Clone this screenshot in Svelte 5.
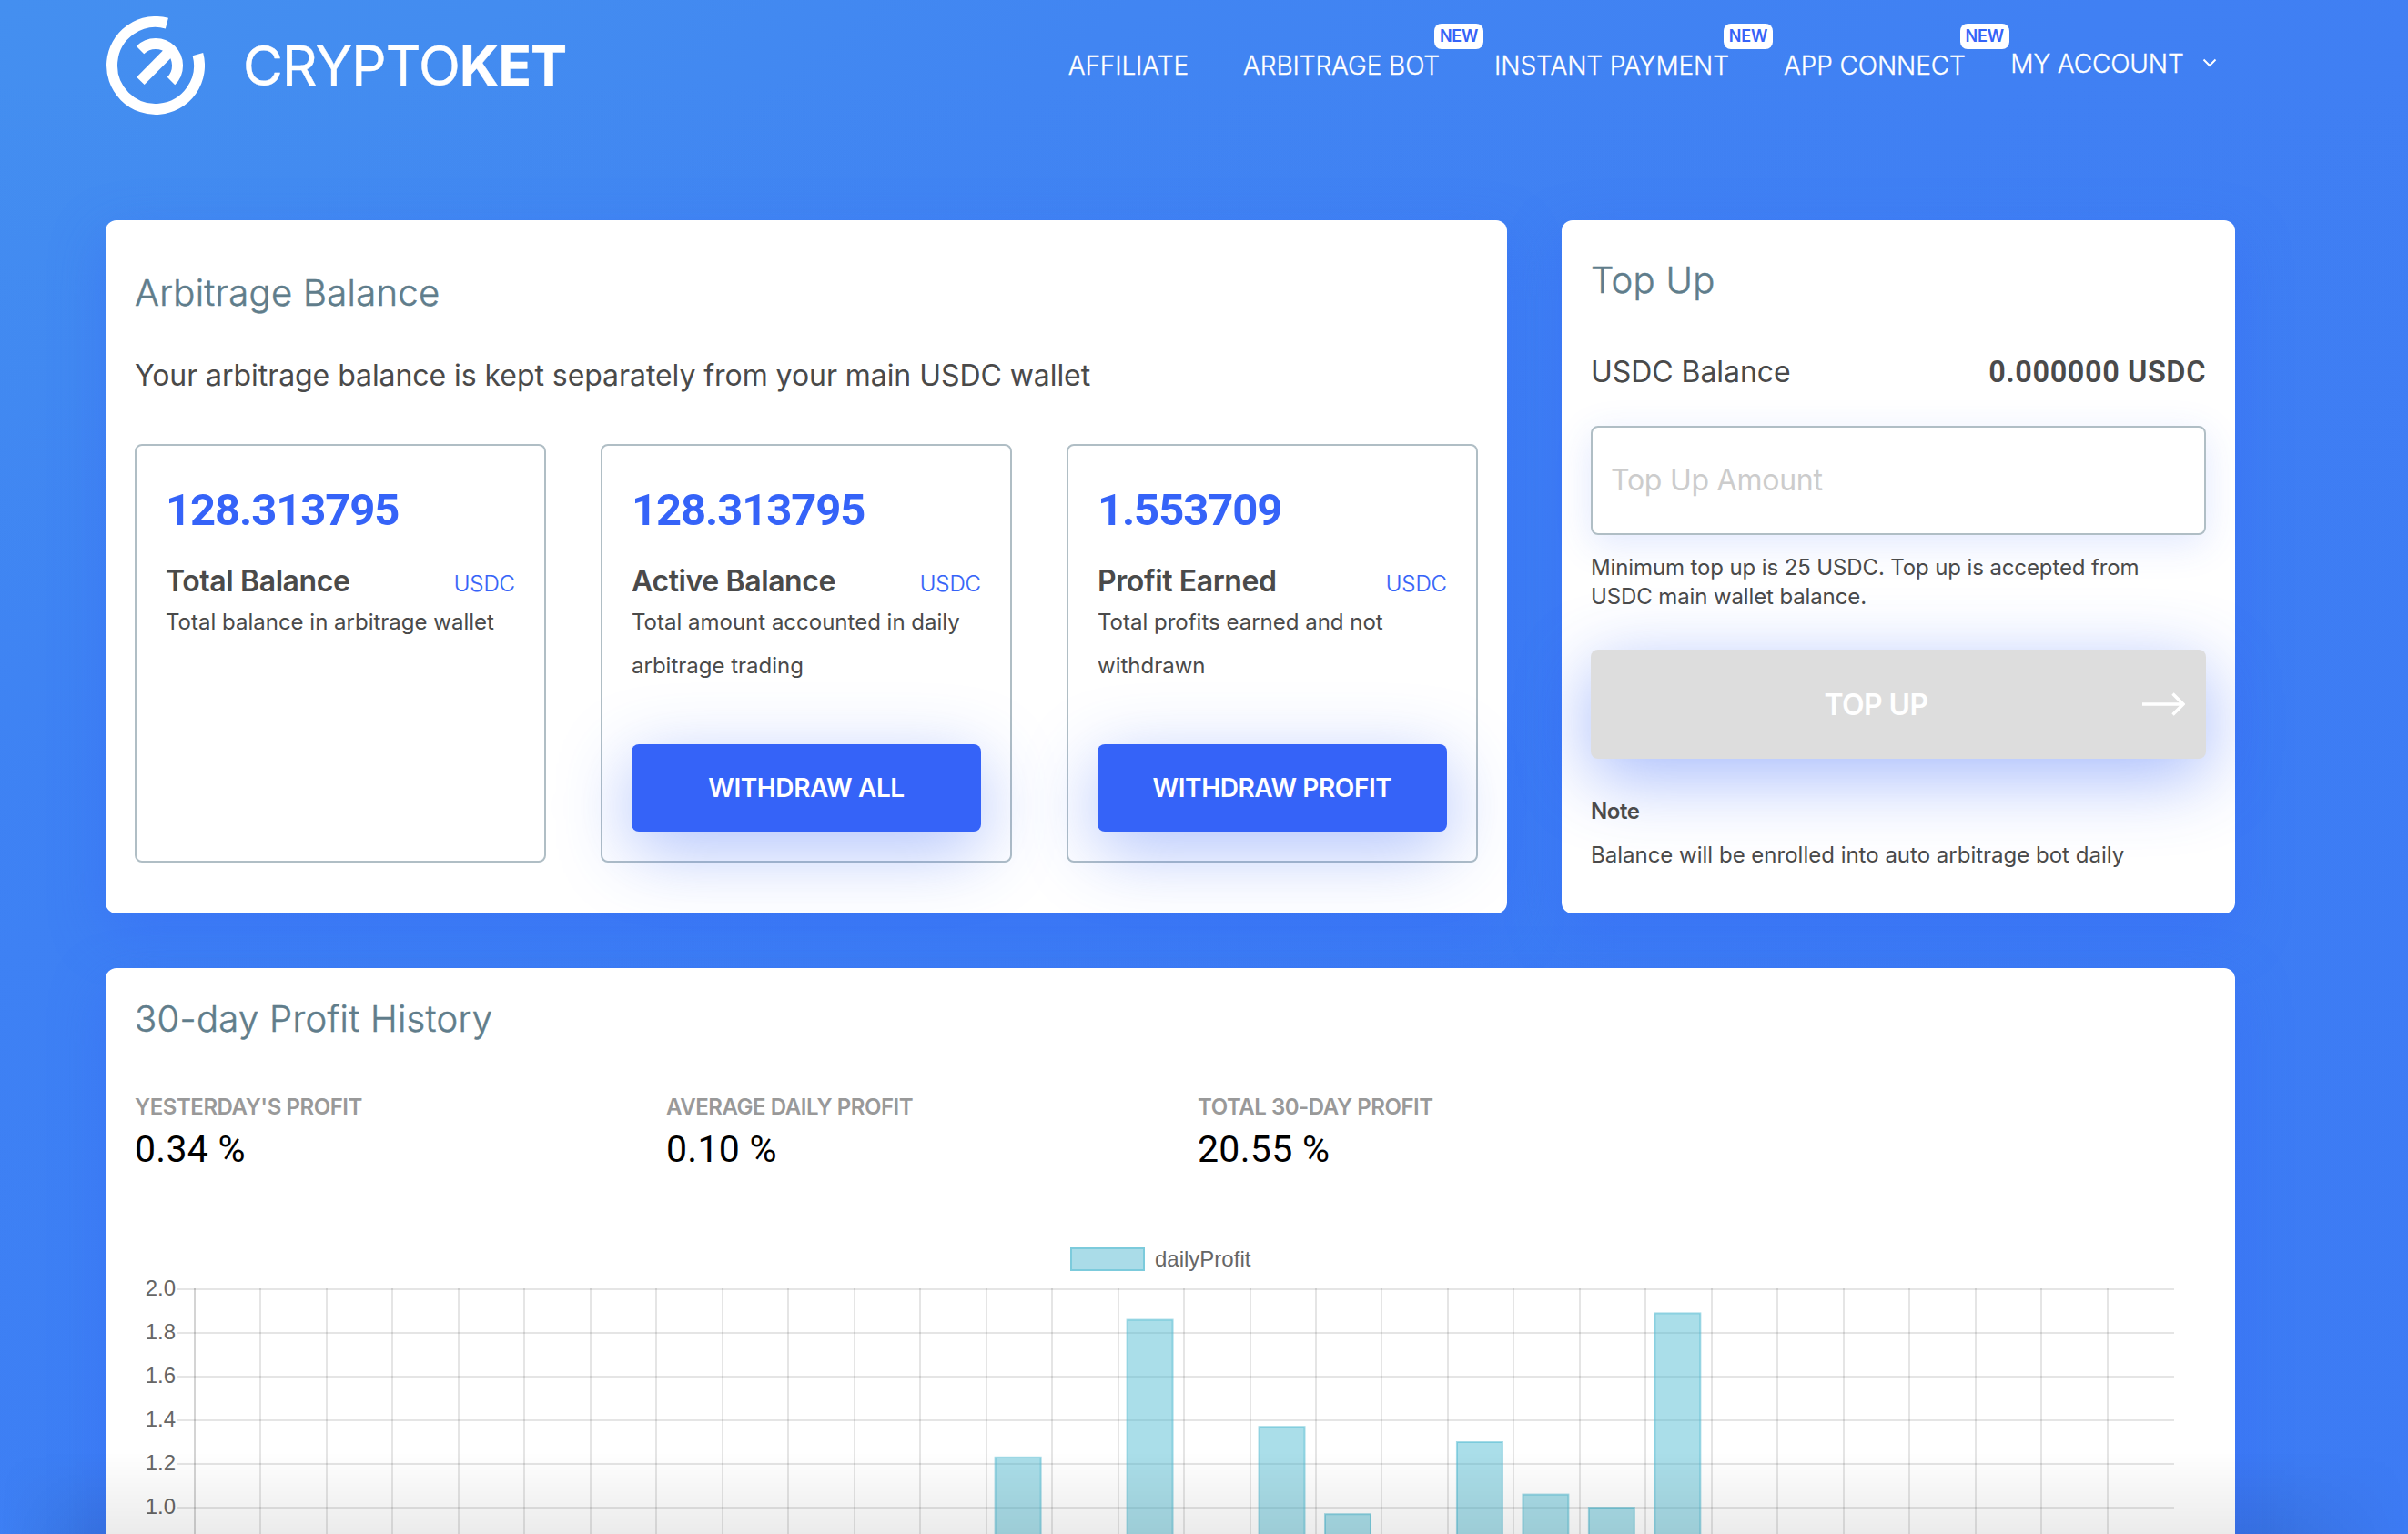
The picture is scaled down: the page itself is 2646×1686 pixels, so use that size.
<script>
  const nav = [
    { label: 'AFFILIATE', isNew: false },
    { label: 'ARBITRAGE BOT', isNew: true },
    { label: 'INSTANT PAYMENT', isNew: true },
    { label: 'APP CONNECT', isNew: true }
  ];

  const balances = [
    { amount: '128.313795', name: 'Total Balance', text: 'Total balance in arbitrage wallet', action: '' },
    { amount: '128.313795', name: 'Active Balance', text: 'Total amount accounted in daily arbitrage trading', action: 'WITHDRAW ALL' },
    { amount: '1.553709', name: 'Profit Earned', text: 'Total profits earned and not withdrawn', action: 'WITHDRAW PROFIT' }
  ];

  const stats = [
    { label: "YESTERDAY'S PROFIT", value: '0.34 %' },
    { label: 'AVERAGE DAILY PROFIT', value: '0.10 %' },
    { label: 'TOTAL 30-DAY PROFIT', value: '20.55 %' }
  ];

  // Daily profit by day index, in percent.
  const bars = [
    { day: 12, value: 1.23 },
    { day: 14, value: 1.86 },
    { day: 16, value: 1.37 },
    { day: 17, value: 0.97 },
    { day: 19, value: 1.3 },
    { day: 20, value: 1.06 },
    { day: 21, value: 1.0 },
    { day: 22, value: 1.89 }
  ];

  const ticks = ['2.0', '1.8', '1.6', '1.4', '1.2', '1.0'];
  const left = 66;
  const top = 53;
  const step = 72.47;
  const row = 48;
  const columns = Array.from({ length: 30 }, (_, i) => Math.round(left + i * step));
  const yOf = (v) => top + ((2 - v) / 0.2) * row;
</script>

<div class="page">
  <header>
    <div class="brand">
      <svg class="mark" width="108" height="108" viewBox="-54 -54 108 108" fill="none" stroke="#fff" stroke-width="12">
        <path d="M12.4 -46.4A48 48 0 1 0 46.4 -12.4" />
        <path d="M-17 -17A24 24 0 0 1 17 17" />
        <path d="M-16.6 16.9L15 -15" />
      </svg>
      <div class="wordmark">CRYPTO<b>KET</b></div>
    </div>
    <nav>
      {#each nav as item}
        <a class="link" href="#top">{item.label}{#if item.isNew}<span class="badge">NEW</span>{/if}</a>
      {/each}
      <a class="link account" href="#top">MY ACCOUNT
        <svg width="16" height="10" viewBox="0 0 16 10" fill="none" stroke="#fff" stroke-width="2"><path d="M1.5 1.5L8 8L14.500 1.5" /></svg>
      </a>
    </nav>
  </header>

  <main>
    <section class="card arbitrage">
      <h2>Arbitrage Balance</h2>
      <p class="lead">Your arbitrage balance is kept separately from your main USDC wallet</p>
      <div class="boxes">
        {#each balances as b}
          <div class="box">
            <div class="amount">{b.amount}</div>
            <div class="row"><strong>{b.name}</strong><span class="unit">USDC</span></div>
            <p class="desc">{b.text}</p>
            {#if b.action}<button class="withdraw">{b.action}</button>{/if}
          </div>
        {/each}
      </div>
    </section>

    <section class="card topup">
      <h2>Top Up</h2>
      <div class="wallet"><span>USDC Balance</span><strong>0.000000 USDC</strong></div>
      <input placeholder="Top Up Amount" />
      <p class="hint">Minimum top up is 25 USDC. Top up is accepted from USDC main wallet balance.</p>
      <button class="submit">
        <span>TOP UP</span>
        <svg width="48" height="26" viewBox="0 0 48 26" fill="none" stroke="#fff" stroke-width="3.4"><path d="M1 13H46M34.500 1.500L46 13L34.500 24.500" /></svg>
      </button>
      <strong class="note">Note</strong>
      <p class="fine">Balance will be enrolled into auto arbitrage bot daily</p>
    </section>

    <section class="card history">
      <h2>30-day Profit History</h2>
      <div class="stats">
        {#each stats as s}
          <div><div class="label">{s.label}</div><div class="value">{s.value}</div></div>
        {/each}
      </div>
      <svg class="chart" width="2276" height="340" viewBox="0 0 2276 340">
        <rect x="1029" y="8" width="80" height="24" fill="#aadce8" stroke="#7ccbdc" stroke-width="2" />
        <text x="1121" y="28">dailyProfit</text>
        {#each ticks as t, i}
          <rect x="46" y={top - 1 + i * row} width="2195" height="2" fill="#000" fill-opacity=".1" />
          <text class="tick" x="45" y={top + 7 + i * row}>{t}</text>
        {/each}
        {#each columns as x, i}
          <rect x={x - 1} y={top - 1} width="2" height="300" fill="#000" fill-opacity={i === 0 ? 0.17 : 0.1} />
        {/each}
        {#each bars as b}
          <rect class="bar" x={left + b.day * step + 10} y={yOf(b.value)} width="50" height="400" />
        {/each}
      </svg>
    </section>
  </main>
  <div class="fade"></div>
</div>

<style>
  :global(body) { margin: 0; overflow: hidden; }
  .page {
    position: relative;
    box-sizing: border-box;
    width: 2646px;
    height: 1686px;
    overflow: hidden;
    padding: 0 190px 0 116px;
    background:
      linear-gradient(180deg, rgba(58, 124, 246, 0) 5%, rgba(58, 124, 246, .45) 50%),
      linear-gradient(140deg, #448ff0 0%, #438cf0 12%, #4185f2 27%, #4080f3 50%, #3f7af2 100%);
    font-family: Inter, 'Liberation Sans', sans-serif;
    font-size: 24px;
    letter-spacing: -.06px;
    color: #4a4a4a;
  }
  header { display: flex; justify-content: space-between; height: 242px; color: #fff; }
  .brand { display: flex; align-items: center; height: 108px; margin-top: 18px; }
  .wordmark { margin-left: 42px; font-size: 60px; line-height: 72px; letter-spacing: -.8px; -webkit-text-stroke: .4px #fff; }
  .mark { margin-left: 1px; }
  nav { display: flex; gap: 60px; margin: 55px 20px 0 0; height: 34px; }
  .link { position: relative; color: #fff; text-decoration: none; font-size: 28px; line-height: 34px; font-weight: 300; letter-spacing: -.1px; white-space: nowrap; -webkit-text-stroke: .3px #fff; }
  .account { margin: -2px 0 0 -10.500px; }
  .account svg { margin-left: 12.500px; vertical-align: 6px; }
  .badge {
    position: absolute; left: calc(100% - 6px); top: -29px;
    width: 54px; height: 28px; border-radius: 8px; background: #fff; color: #3563f8;
    font-size: 18px; line-height: 28px; font-weight: 600; text-align: center; letter-spacing: -.2px;
    -webkit-text-stroke: 0;
  }
  main { display: grid; grid-template-columns: 1540px 740px; gap: 60px; }
  .card { box-sizing: border-box; padding: 0 32px; background: #fff; border-radius: 12px; box-shadow: 0 20px 60px rgba(53, 99, 248, .4); }
  .arbitrage, .topup { height: 762px; }
  h2 { margin: 0; font-size: 40px; line-height: 48px; font-weight: 300; color: #607d8b; letter-spacing: .3px; -webkit-text-stroke: .5px #607d8b; }
  .arbitrage h2 { padding-top: 56px; }
  .lead { margin: 47px 0 0; font-size: 32px; line-height: 40px; }
  .boxes { display: grid; grid-template-columns: repeat(3, 452px); gap: 60px; margin-top: 55px; }
  .box { box-sizing: border-box; display: flex; flex-direction: column; height: 460px; padding: 41px 32px 32px; border: 2px solid #b0bec5; border-radius: 8px; }
  .amount { font-family: Roboto, sans-serif; font-size: 49px; line-height: 60px; font-weight: 700; letter-spacing: -1.1px; color: #3563f8; }
  .row { display: flex; justify-content: space-between; align-items: baseline; margin-top: 28px; font-size: 32px; line-height: 40px; }
  strong { font-weight: 600; letter-spacing: -.4px; }
  .unit { font-size: 24px; font-weight: 300; color: #3563f8; -webkit-text-stroke: .2px #3563f8; }
  .desc { margin: -2px 0 0; line-height: 48px; letter-spacing: 0; }
  button { font-family: inherit; border: 0; color: #fff; font-weight: 600; }
  .withdraw { height: 96px; margin-top: auto; border-radius: 8px; background: #3563f8; font-size: 28px; letter-spacing: -.4px; box-shadow: 0 20px 80px rgba(53, 99, 248, .4); }
  .topup { display: flex; flex-direction: column; }
  .topup h2 { padding-top: 42px; }
  .wallet { display: flex; justify-content: space-between; align-items: baseline; margin-top: 57px; font-size: 32px; line-height: 40px; }
  .wallet strong { font-family: Roboto, sans-serif; font-size: 32.500px; letter-spacing: .6px; }
  input { box-sizing: border-box; height: 120px; margin-top: 39px; padding: 0 20px 2px; border: 2px solid #b0bec5; border-radius: 8px; font: 32px Inter, sans-serif; letter-spacing: -.25px; box-shadow: 0 10px 40px rgba(53, 99, 248, .15); }
  input::placeholder { color: #ccc; }
  .hint { margin: 20px 0 0; line-height: 32px; letter-spacing: -.12px; }
  .submit { display: flex; align-items: center; height: 120px; flex: none; margin-top: 42px; padding: 0 23px 0 0; border-radius: 8px; background: #ddd; font-size: 32px; letter-spacing: -.6px; box-shadow: 0 20px 80px rgba(53, 99, 248, .45); }
  .submit span { flex: 1; margin-left: 22px; }
  .note { margin-top: 42px; line-height: 32px; }
  .fine { margin: 8px 0 0; line-height: 48px; letter-spacing: 0; }
  .history { grid-column: 1 / -1; height: 900px; }
  .history h2 { padding-top: 32px; }
  .stats { display: grid; grid-template-columns: repeat(4, 524px); gap: 60px; margin-top: 57px; }
  .label { line-height: 32px; font-weight: 600; letter-spacing: -.45px; color: #999; }
  .value { margin-top: 6px; font-family: Roboto, sans-serif; font-size: 41px; line-height: 48px; letter-spacing: .3px; color: #000; }
  .chart { display: block; margin-top: 77px; font: 24px 'Liberation Sans', Arial, sans-serif; letter-spacing: 0; fill: #666; }
  .tick { text-anchor: end; }
  .bar { fill: rgba(75, 184, 208, .47); stroke: rgba(75, 184, 208, .5); stroke-width: 2; }
  .fade {
    position: absolute; left: 0; right: 0; bottom: 0; height: 90px; pointer-events: none;
    background: linear-gradient(rgba(0, 0, 0, 0), rgba(0, 0, 0, .08));
    mask-image: linear-gradient(90deg, transparent, #000 100px, #000 calc(100% - 150px), transparent);
  }
</style>
